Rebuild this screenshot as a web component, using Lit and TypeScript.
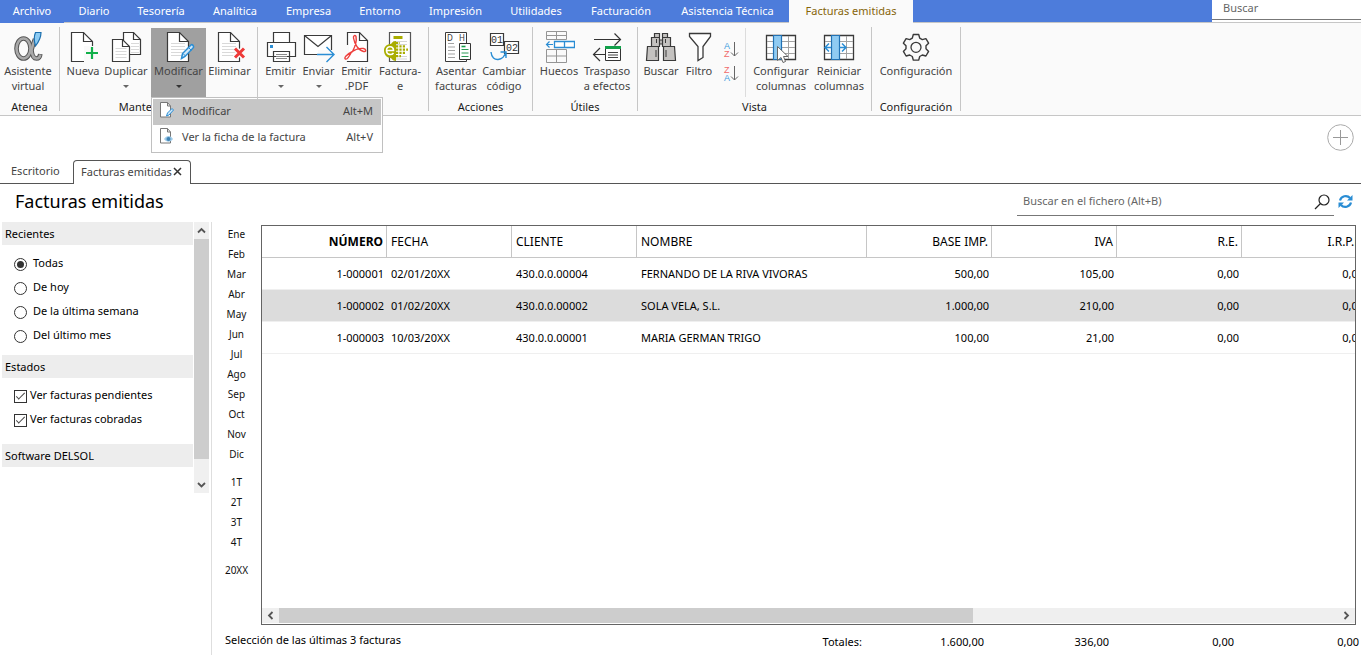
import { LitElement, html, css, svg, nothing } from "lit";
import { customElement, property, state } from "lit/decorators.js";
import { classMap } from "lit/directives/class-map.js";

const ink = "#3a3a3a";
const blue = "#2a8dd4";

const sheet = (x: number, y: number, w: number, h: number, f: number) => svg`
  <path d="M${x} ${y}h${w - f}l${f} ${f}v${h - f}h${-w}z" fill="#fff" stroke=${ink} stroke-width="1.2"/>
  <path d="M${x + w - f} ${y}v${f}h${f}" fill="none" stroke=${ink} stroke-width="1.2"/>`;

const textLines = (x: number, y: number, w: number, n: number, step: number) => svg`
  ${Array.from({ length: n }, (_, i) => svg`<path d="M${x} ${y + i * step}h${w}" stroke="#d9d9d9" stroke-width="1"/>`)}`;

const icons: Record<string, unknown> = {
  alpha: svg`
    <g fill="none" stroke="#555" stroke-width="4.600"><ellipse cx="11.500" cy="17.500" rx="7" ry="10"/>
      <path d="M23 8C21.500 12 20.500 15 19.500 19c.5 5 2 8.500 5 8.500 2 0 3.500-1.500 3.800-4.500"/></g>
    <g fill="none" stroke="#a9a9a9" stroke-width="2.600"><ellipse cx="11.500" cy="17.500" rx="7" ry="10"/>
      <path d="M23 8C21.500 12 20.500 15 19.500 19c.5 5 2 8.500 5 8.500 2 0 3.500-1.500 3.800-4"/></g>
    <path d="M23.500 1.500h5.500c0 5-2 9-5.500 13.500-1.500-5-2-9 0-13.500z" fill="#8ccbf3" stroke="#1b6fae" stroke-width="1.200"/>`,
  nueva: svg`${sheet(4.5, 1.5, 21, 29, 9)}
    <path d="M17 15h16v16H17z" fill="#fafafa"/><path d="M25 16v12M19 22h12" stroke="#12b04a" stroke-width="2.200"/>`,
  duplicar: svg`${sheet(13.5, 1.5, 17, 22, 7)}${textLines(21, 12.5, 8, 4, 3)}
    ${sheet(2.5, 8.5, 17, 22, 7)}${textLines(5.5, 17.5, 11, 4, 3)}`,
  modificar: svg`${sheet(4.5, 1.5, 21, 29, 9)}${textLines(8, 12.5, 14, 5, 3)}
    <path d="M18.500 27.500l1-5L28 14c1-1 3 .5 2.500 2.500L22 25.500z" fill="#cfe8fa" stroke=${blue} stroke-width="1.500"/>
    <path d="M25.500 16.500l3 3M20 22.500l2.500 2.500" stroke=${blue} stroke-width="1"/>`,
  eliminar: svg`${sheet(4.5, 1.5, 21, 29, 9)}${textLines(8, 12.5, 14, 5, 3)}
    <path d="M21 17.500l9 9M30 17.500l-9 9" stroke="#fafafa" stroke-width="6"/>
    <path d="M21 17.500l9 9M30 17.500l-9 9" stroke="#ee3a38" stroke-width="3"/>`,
  imprimir: svg`<g fill="#fff" stroke=${ink} stroke-width="1.200">
    <path d="M8.500 1.500h16v10h-16zM2.500 11.500h28v14h-28zM8.500 20.500h16v10h-16z"/></g>
    <path d="M11 23.500h11M11 25.500h11M11 27.500h11" stroke="#8a8a8a"/><path d="M5 14h3v3H5z" fill=${blue}/>`,
  enviar: svg`<path d="M1.500 4.500h27v19h-27z" fill="#fff" stroke=${ink} stroke-width="1.200"/>
    <path d="M1.500 4.500l13.500 11 13.500-11" fill="none" stroke=${ink} stroke-width="1.200"/>
    <path d="M15 19h16v8H15z" fill="#fafafa"/>
    <path d="M14 23.500h16M23.500 16l7.500 7.500-7.500 7.500" fill="none" stroke=${blue} stroke-width="1.400"/>`,
  pdf: svg`${sheet(6.5, 1.5, 20, 29, 8)}
    <path d="M3 14h5v16H3z" fill="#fafafa"/>
    <path d="M4.500 28c-2-1 1-4.500 7-7.500 3-5.500 4.500-10 3.500-15-.5-2-3-1-2.500 1.500 1 6 5 12.500 10 13.500 3 .500 3-2.500 0-3-4-.5-9 1.500-12 3.500-2 4-4.500 8-6 7z" fill="none" stroke="#ee3f3c" stroke-width="1.400"/>`,
  facturae: svg`<path d="M5.500 1.500h21v29h-21z" fill="#fff" stroke="#555" stroke-width="1.200"/>
    <path d="M9.500 5h9v3h-9z" fill="#a9ad00"/>
    <path d="M9 10.500h14M9 13.500h14M9 25.500h14M9 28h14" stroke="#d4d4d4"/>
    <path d="M0 19.500c0-4 3-6.500 7-6.500 1-2 3-3 5-3v20c-2 0-4-1-5-3-4 0-7-3-7-7.500z" fill="#a9ad00"/>
    <g fill="none" stroke="#a9ad00" stroke-width="2.200" stroke-dasharray="2.200 1.200"><path d="M12 12h4M12 15.300h9M12 18.600h12M12 21.900h10M12 25.200h5"/></g>
    <path d="M2.500 19.500h7c0-5-7-5-7 0 0 4.500 5 5 7 2.500" fill="none" stroke="#fff" stroke-width="1.600"/>`,
  asentar: svg`<path d="M5.500 1.500h21v29h-21z" fill="#fff" stroke=${ink}/>
    <text x="7" y="10" font-size="8" fill="#333">D</text><text x="19" y="10" font-size="8" fill="#333">H</text>
    <path d="M8 12.500h6M8 16h7M8 19.500h7M8 23h7M8 26.500h7" stroke="#a3a3a3"/>
    <path d="M19.500 12.500h11v16h-11z" fill="#fff" stroke="#333"/>
    <path d="M21.500 15.500h4" stroke="#12a04a" stroke-width="1.600"/><path d="M21.500 18.500h7M21.500 22h7M21.500 25.500h7" stroke="#2d9a56"/>`,
  cambiar: svg`<path d="M2.500 2.500h13v12h-13z" fill="#fff" stroke=${ink} stroke-width="1.200"/>
    <path d="M16.500 10.500h14v12h-14z" fill="#fff" stroke=${ink} stroke-width="1.200"/>
    <g font-family="Liberation Mono" font-size="10" fill="#333"><text x="3" y="12">01</text><text x="18" y="20">02</text></g>
    <path d="M3 21c1 11 13 9 15-.5M12.500 21h5.500v6" fill="none" stroke=${blue} stroke-width="1.400"/>`,
  huecos: svg`<path d="M3.500.5h20v8h-20zM3.500 4.500h20M13.500.500v8M3.500 18.500h20v13h-20zM3.500 25h20M13.500 18.500v13" fill="none" stroke="#959595"/>
    <path d="M11.500 10.500h20v6h-20zM21.500 10.500v6" fill="#fff" stroke=${blue} stroke-width="1.300"/>
    <path d="M10 13.500H3.500M6.500 10.500l-3 3 3 3" fill="none" stroke=${blue} stroke-width="1.200"/>`,
  traspaso: svg`<path d="M3 8.500h26M23.500 2.500l6 6-6 6M14 23.500H2.500M9 17l-6.500 6.500L9 30" fill="none" stroke="#333" stroke-width="1.200"/>
    <path d="M14.500 17.500h15v12h-15z" fill="#fff" stroke="#333"/><path d="M14 15h16v3H14z" fill="#12a04a"/>
    <path d="M17 21.500h10M17 24h10M17 26.500h10" stroke="#444"/>`,
  buscar: svg`<g fill="#c4c2c0" stroke=${ink} stroke-width="1.200"><path d="M9.500 2.500h5v4h-5zM17.500 2.500h5v4h-5zM6.500 6.500h8v9h-8zM17.500 6.500h8v9h-8zM14.500 9h3v4h-3zM2.500 15.500h11v14h-12zM18.500 15.500h11l1 14h-12z"/></g>
    <path d="M11 19v7M21 19v7M11.500 8v4M20.500 8v4" stroke=${ink}/>`,
  filtro: svg`<path d="M6.500 2.500h21v3l-7.500 10v11l-5 3v-14l-8.500-10z" fill="#fff" stroke=${ink} stroke-width="1.300"/>`,
  columnas: svg`<path d="M1.500 4.500h29v24h-29z" fill="#fff" stroke=${ink} stroke-width="1.300"/>
    <path d="M2 10.500h28M2 16.500h28M2 22.500h28M23.500 5v23" stroke="#a3a3a3"/>
    <path d="M8.500 4.500h8v24h-8z" fill="#90cbf2" stroke="#2272b5" stroke-width="1.200"/>
    <path d="M12.500 15.500v14l3.500-3 2 5 2.500-1-2-5h4.500z" fill="#fff" stroke="#666"/>`,
  reiniciar: svg`<path d="M1.500 4.500h29v24h-29z" fill="#fff" stroke=${ink} stroke-width="1.300"/>
    <path d="M2 10.500h28M2 16.500h28M2 22.500h28M23.500 5v23" stroke="#a3a3a3"/>
    <path d="M8.500 4.500h8v24h-8z" fill="#90cbf2" stroke="#2272b5" stroke-width="1.200"/>
    <path d="M8 16.500H2M6 12.500l-4 4 4 4M16.500 16.500h6.500M19 12.500l4 4-4 4" fill="none" stroke=${blue} stroke-width="1.500"/>`,
  engranaje: svg`<path d="M13.300 3.500h5.400l1 3.600 2.600 1.500 3.600-1 2.700 4.600-2.600 2.600v3l2.600 2.600-2.700 4.600-3.600-1-2.600 1.500-1 3.600h-5.400l-1-3.600-2.600-1.500-3.600 1-2.700-4.600 2.600-2.600v-3L3.400 12.200l2.700-4.600 3.600 1 2.600-1.500z" fill="none" stroke=${ink} stroke-width="1.400" stroke-linejoin="round"/>
    <circle cx="16" cy="16.300" r="5" fill="none" stroke=${ink} stroke-width="1.300"/>`,
};

interface Tool {
  icon: string;
  label: string[];
  drop?: boolean;
  menu?: boolean;
}
interface Group {
  cls: string;
  title: string;
  tools: (Tool | "sort")[];
}

const groups: Group[] = [
  { cls: "atenea", title: "Atenea", tools: [{ icon: "alpha", label: ["Asistente", "virtual"] }] },
  {
    cls: "mant",
    title: "Mantenimiento",
    tools: [
      { icon: "nueva", label: ["Nueva"] },
      { icon: "duplicar", label: ["Duplicar"], drop: true },
      { icon: "modificar", label: ["Modificar"], drop: true, menu: true },
      { icon: "eliminar", label: ["Eliminar"] },
    ],
  },
  {
    cls: "emision",
    title: "",
    tools: [
      { icon: "imprimir", label: ["Emitir"], drop: true },
      { icon: "enviar", label: ["Enviar"], drop: true },
      { icon: "pdf", label: ["Emitir", ".PDF"] },
      { icon: "facturae", label: ["Factura-", "e"] },
    ],
  },
  {
    cls: "acciones",
    title: "Acciones",
    tools: [
      { icon: "asentar", label: ["Asentar", "facturas"] },
      { icon: "cambiar", label: ["Cambiar", "código"] },
    ],
  },
  {
    cls: "utiles",
    title: "Útiles",
    tools: [
      { icon: "huecos", label: ["Huecos"] },
      { icon: "traspaso", label: ["Traspaso", "a efectos"] },
    ],
  },
  {
    cls: "vista",
    title: "Vista",
    tools: [
      { icon: "buscar", label: ["Buscar"] },
      { icon: "filtro", label: ["Filtro"] },
      "sort",
      { icon: "columnas", label: ["Configurar", "columnas"] },
      { icon: "reiniciar", label: ["Reiniciar", "columnas"] },
    ],
  },
  { cls: "config", title: "Configuración", tools: [{ icon: "engranaje", label: ["Configuración"] }] },
];

@customElement("app-ribbon")
class AppRibbon extends LitElement {
  @state() private open = true;

  static styles = css`
    :host {
      display: flex;
      background: #fafafa;
      border-bottom: 1px solid #c6c6c6;
      padding-top: 4px;
      position: relative;
      z-index: 2;
    }
    .group { position: relative; flex: none; padding-right: 1px; }
    .group::after {
      content: "";
      position: absolute;
      right: 0;
      top: 0;
      bottom: 4px;
      width: 1px;
      background: #c6c6c6;
    }
    .tools { display: grid; height: 70px; padding-top: 1px; box-sizing: border-box; }
    .atenea .tools { grid-template-columns: 56px; padding-right: 3px; }
    .mant .tools { grid-template-columns: 36px 50px 55px 47px; padding-left: 5px; padding-right: 4px; }
    .emision .tools { grid-template-columns: 37px 39px 37px 50px; padding-left: 4px; padding-right: 3px; }
    .acciones .tools { grid-template-columns: 48px 48px; padding-left: 3px; padding-right: 4px; }
    .utiles .tools { grid-template-columns: 46px 50px; padding-left: 3px; padding-right: 5px; }
    .vista .tools { grid-template-columns: 40px 36px 33px 62px 54px; padding-left: 3px; padding-right: 5px; }
    .config .tools { grid-template-columns: 88px; }
    .title {
      height: 18px;
      line-height: 20px;
      text-align: center;
      color: #1a1a1a;
    }
    .slot { position: relative; display: grid; }
    button { font: inherit; color: inherit; border: 0; background: none; padding: 0; margin: 0; }
    .tool {
      display: flex;
      flex-direction: column;
      align-items: center;
      padding-top: 3px;
      color: #444;
      line-height: 15px;
      white-space: nowrap;
      min-width: 0;
    }
    .tool svg { width: 32px; height: 32px; flex: none; }
    .tool.pressed { background: #a0a0a0; }
    .arrow {
      width: 0;
      border: 3px solid transparent;
      border-top-color: #666;
      border-bottom: 0;
      margin-top: 7px;
    }
    .pressed .arrow { border-top-color: #333; }
    .sorts {
      display: flex;
      flex-direction: column;
      gap: 7px;
      padding-top: 13px;
      padding-left: 6px;
      border-right: 1px solid #dcdcdc;
      margin-right: 4px;
    }
    .sorts button { width: 16px; height: 17px; }
    .sorts svg { display: block; width: 16px; height: 17px; overflow: visible; }
    .menu {
      position: absolute;
      left: 0;
      top: 100%;
      width: 232px;
      box-sizing: border-box;
      border: 1px solid #c0c0c0;
      background: #fff;
      padding: 1px;
    }
    .item {
      display: flex;
      align-items: center;
      width: 100%;
      height: 26px;
      padding: 0 8px 4px 5px;
      color: #444;
      white-space: nowrap;
    }
    .item svg { width: 16px; height: 18px; margin-right: 8px; }
    .item .key { margin-left: auto; }
    .item.on { background: #c6c6c6; }
  `;

  private icon(name: string) {
    return html`<svg viewBox="0 0 32 32" aria-hidden="true">${icons[name]}</svg>`;
  }

  private sort(first: string, second: string, az: boolean) {
    const top = az ? "#3a9bdc" : "#f06a6a";
    const bottom = az ? "#f06a6a" : "#3a9bdc";
    return html`<button aria-label=${az ? "Orden ascendente" : "Orden descendente"}>
      <svg viewBox="0 0 16 17">
        <g font-family="Liberation Sans" font-size="9"><text x="1" y="8" fill=${top}>${first}</text><text x="1" y="16" fill=${bottom}>${second}</text></g>
        <path d="M11.500 1v14M8 11.500l3.500 3.500 3.500-3.500" fill="none" stroke="#666" />
      </svg>
    </button>`;
  }

  private menu() {
    const page = svg`<path d="M2.500 1.500h7l3 3.500v11h-10z" fill="#fff" stroke="#777"/><path d="M9.500 1.500v3.500h3" fill="none" stroke="#777"/>`;
    return html`<div class="menu" role="menu">
      <button class="item on" role="menuitem">
        <svg viewBox="0 0 16 18">${page}<path d="M8.500 15l1-3 4.500-4.500 1.500 1.500-4.500 5z" fill="#cfe8fa" stroke=${blue} /></svg>
        <span>Modificar</span><span class="key">Alt+M</span>
      </button>
      <button class="item" role="menuitem">
        <svg viewBox="0 0 16 18">${page}<path d="M6 12c2.500-4 6.500-4 9 0-2.500 3.500-6.500 3.500-9 0z" fill="#9fcbe8" /><circle cx="10.500" cy="12" r="2" fill="#3f83b5" /></svg>
        <span>Ver la ficha de la factura</span><span class="key">Alt+V</span>
      </button>
    </div>`;
  }

  private tool(t: Tool) {
    const pressed = !!t.menu && this.open;
    return html`<div class="slot">
      <button class=${classMap({ tool: true, pressed })} @click=${() => t.menu && (this.open = !this.open)}>
        ${this.icon(t.icon)}${t.label.map((l) => html`<span>${l}</span>`)}
        ${t.drop ? html`<span class="arrow"></span>` : nothing}
      </button>
      ${pressed ? this.menu() : nothing}
    </div>`;
  }

  render() {
    return groups.map(
      (g) => html`<section class="group ${g.cls}">
        <div class="tools">
          ${g.tools.map((t) =>
            t === "sort"
              ? html`<div class="sorts">${this.sort("A", "Z", true)}${this.sort("Z", "A", false)}</div>`
              : this.tool(t)
          )}
        </div>
        <div class="title">${g.title}</div>
      </section>`
    );
  }
}

@customElement("filter-panel")
class FilterPanel extends LitElement {
  static styles = css`
    :host { display: flex; align-items: flex-start; width: 209px; flex: none; }
    .list { flex: 1; padding-left: 2px; margin-right: 1px; }
    h2 {
      margin: 0;
      font-size: 11px;
      font-weight: 400;
      line-height: 23px;
      padding-left: 3px;
      background: #ededed;
      color: #000;
    }
    .rows { padding: 7px 0 7px 12px; }
    .rows.checks { padding: 6px 0 12px 12px; }
    label { display: flex; align-items: center; height: 24px; line-height: 22px; gap: 6px; }
    .checks label { gap: 3px; }
    label span { padding-bottom: 2px; }
    input {
      appearance: none;
      flex: none;
      width: 13px;
      height: 13px;
      margin: 0;
      border: 1px solid #333;
      background: #fff;
      display: grid;
      place-content: center;
    }
    input[type="radio"] { border-radius: 50%; }
    input[type="radio"]:checked::before {
      content: "";
      width: 7px;
      height: 7px;
      border-radius: 50%;
      background: #333;
    }
    input[type="checkbox"]:checked::before {
      content: "";
      width: 8px;
      height: 3px;
      margin-bottom: 3px;
      border: solid #444;
      border-width: 0 0 1px 1px;
      rotate: -45deg;
    }
    .bar {
      width: 15px;
      height: 271px;
      background: #f0f0f0;
      display: flex;
      flex-direction: column;
    }
    .bar button { border: 0; background: none; padding: 0; height: 17px; }
    .bar .thumb { flex: 1; background: #cdcdcd; margin-bottom: 17px; }
    .bar svg { display: block; margin: auto; width: 9px; height: 9px; }
  `;

  render() {
    const recent = ["Todas", "De hoy", "De la última semana", "Del último mes"];
    return html`<div class="list">
        <h2>Recientes</h2>
        <div class="rows">
          ${recent.map((r, i) => html`<label><input type="radio" name="recent" ?checked=${i === 0} /><span>${r}</span></label>`)}
        </div>
        <h2>Estados</h2>
        <div class="rows checks">
          <label><input type="checkbox" checked /><span>Ver facturas pendientes</span></label>
          <label><input type="checkbox" checked /><span>Ver facturas cobradas</span></label>
        </div>
        <h2>Software DELSOL</h2>
      </div>
      <div class="bar">
        <button aria-label="Subir"><svg viewBox="0 0 9 9"><path d="M1 6.500L4.500 3 8 6.500" fill="none" stroke="#555" stroke-width="1.800" /></svg></button>
        <div class="thumb"></div>
        <button aria-label="Bajar"><svg viewBox="0 0 9 9"><path d="M1 3l3.500 3.500L8 3" fill="none" stroke="#555" stroke-width="1.800" /></svg></button>
      </div>`;
  }
}

@customElement("invoice-grid")
class InvoiceGrid extends LitElement {
  @property({ type: Number }) selected = 1;

  static styles = css`
    :host {
      display: flex;
      flex-direction: column;
      flex: 1;
      min-height: 0;
      border: 1px solid #646464;
      overflow: hidden;
      background: #fff;
    }
    .view { flex: 1; overflow: hidden; min-height: 0; }
    table { border-collapse: separate; border-spacing: 0; table-layout: fixed; width: 1105px; font-size: 11px; color: #000; }
    .std { width: 125px; }
    .wide { width: 230px; }
    th, td {
      box-sizing: border-box;
      height: 32px;
      padding: 0 3px 0 4px;
      text-align: left;
      font-weight: 400;
      white-space: nowrap;
      border-bottom: 1px solid #efefef;
    }
    th { font-size: 12px; border-bottom-color: #c6c6c6; border-right: 1px solid #c6c6c6; }
    .num { text-align: right; }
    .bold { font-weight: 700; }
    .sel td { background: #dcdcdc; }
    .scroll { display: flex; height: 15px; background: #efefef; margin-bottom: 1px; }
    .scroll button { border: 0; background: none; padding: 0; width: 17px; flex: none; }
    .scroll svg { display: block; margin: auto; width: 9px; height: 9px; }
    .track { flex: 1; }
    .thumb { width: 65.5%; height: 100%; background: #cdcdcd; }
  `;

  render() {
    const heads = ["NÚMERO", "FECHA", "CLIENTE", "NOMBRE", "BASE IMP.", "IVA", "R.E.", "I.R.P.F."];
    const rows = [
      ["1-000001", "02/01/20XX", "430.0.0.00004", "FERNANDO DE LA RIVA VIVORAS", "500,00", "105,00", "0,00", "0,00"],
      ["1-000002", "01/02/20XX", "430.0.0.00002", "SOLA VELA, S.L.", "1.000,00", "210,00", "0,00", "0,00"],
      ["1-000003", "10/03/20XX", "430.0.0.00001", "MARIA GERMAN TRIGO", "100,00", "21,00", "0,00", "0,00"],
    ];
    const num = (i: number) => i === 0 || i > 3;
    return html`<div class="view">
        <table>
          <colgroup>
            ${heads.map((_, i) => html`<col class=${i === 3 ? "wide" : "std"} />`)}
          </colgroup>
          <thead>
            <tr>${heads.map((h, i) => html`<th class=${classMap({ num: num(i), bold: i === 0 })}>${h}</th>`)}</tr>
          </thead>
          <tbody>
            ${rows.map(
              (r, n) => html`<tr class=${classMap({ sel: n === this.selected })}>
                ${r.map((c, i) => html`<td class=${classMap({ num: num(i) })}>${c}</td>`)}
              </tr>`
            )}
          </tbody>
        </table>
      </div>
      <div class="scroll">
        <button aria-label="Izquierda"><svg viewBox="0 0 9 9"><path d="M6.500 1L3 4.500 6.500 8" fill="none" stroke="#555" stroke-width="1.800" /></svg></button>
        <div class="track"><div class="thumb"></div></div>
        <button aria-label="Derecha"><svg viewBox="0 0 9 9"><path d="M2.500 1L6 4.500 2.500 8" fill="none" stroke="#555" stroke-width="1.800" /></svg></button>
      </div>`;
  }
}

@customElement("app-root")
class AppRoot extends LitElement {
  static styles = css`
    :host {
      display: flex;
      flex-direction: column;
      height: 100vh;
      min-height: 600px;
      overflow: hidden;
      background: #fff;
      color: #000;
      font-family: "Noto Sans", sans-serif;
      font-size: 11px;
    }
    button { font: inherit; color: inherit; border: 0; background: none; padding: 0; margin: 0; }
    a { color: inherit; text-decoration: none; }
    .top { display: flex; height: 23px; background: #4d7cdb; flex: none; box-shadow: inset 0 -1px #c6c6c6; }
    nav {
      display: grid;
      grid-template-columns: 64px 60px 74px 74px 73px 70px 81px 80px 90px 123px 124px;
      color: #fff;
      line-height: 22px;
      text-align: center;
      white-space: nowrap;
      flex: none;
    }
    nav a { height: 22px; }
    nav .first { height: 23px; background: #4d7cdb; }
    nav .active { height: 23px; background: #fafafa; color: #86650a; }
    .finder { margin-left: auto; width: 149px; background: #fff; height: 22px; }
    .finder input { height: 20px; padding: 0 11px 4px; border-bottom: 1px solid #777; }
    input {
      box-sizing: border-box;
      width: 100%;
      border: 0;
      background: none;
      font: inherit;
      color: #555;
      outline: 0;
      display: block;
    }
    input::placeholder { color: #666; opacity: 1; }
    .desk { display: flex; justify-content: flex-end; padding: 8px 7px 0 0; height: 36px; flex: none; }
    .desk button { width: 27px; height: 27px; }
    .desk svg { display: block; width: 27px; height: 27px; }
    .tabs { display: flex; height: 24px; line-height: 22px; color: #444; flex: none; box-shadow: inset 0 -1px #555; }
    .tabs .plain { width: 73px; box-sizing: border-box; padding-left: 11px; }
    .tabs .current {
      display: flex;
      align-items: center;
      box-sizing: border-box;
      width: 118px;
      padding: 0 8px 2px 7px;
      justify-content: space-between;
      background: #fff;
      border: 1px solid #555;
      border-bottom: 0;
      border-radius: 4px 4px 0 0;
      white-space: nowrap;
    }
    .current button { line-height: 0; }
    .current svg { width: 9px; height: 9px; }
    .head { display: flex; align-items: flex-start; height: 38px; padding: 0 8px 0 15px; box-sizing: border-box; flex: none; }
    h1 { margin: 0; font-size: 18px; font-weight: 400; color: #000; line-height: 34px; flex: 1; }
    .search { display: flex; align-items: center; width: 317px; height: 28px; box-sizing: border-box; border-bottom: 1px solid #777; padding: 0 4px 0 6px; margin-right: 4px; margin-top: 4px; }
    .search input { padding: 0 0 2px; }
    .search svg { width: 16px; height: 16px; flex: none; display: block; }
    .refresh { margin-top: 10px; }
    .refresh svg { width: 15px; height: 15px; display: block; }
    .work { display: flex; flex: 1; min-height: 0; }
    .main { display: flex; flex: 1; min-width: 0; border-left: 1px solid #dedede; margin-left: 2px; }
    .months { width: 49px; flex: none; display: flex; flex-direction: column; padding-top: 3px; font-size: 10px; color: #111; }
    .months button { height: 20px; line-height: 18px; padding-bottom: 2px; }
    .months .gap { margin-top: 8px; }
    .data { flex: 1; min-width: 0; display: flex; flex-direction: column; padding-top: 3px; }
    invoice-grid { margin-right: 5px; }
    .wrap { display: flex; flex-direction: column; flex: 1; min-width: 0; }
    .row { display: flex; flex: 1; min-height: 0; }
    footer { display: flex; height: 30px; padding: 0 2px 0 13px; flex: none; }
    footer .msg { flex: 1; line-height: 29px; }
    dl { display: flex; margin: 0; line-height: 33px; }
    dd { margin: 0; width: 125px; text-align: right; }
    dl dd:first-of-type { width: 122px; }
  `;

  render() {
    const menus = ["Archivo", "Diario", "Tesorería", "Analítica", "Empresa", "Entorno", "Impresión", "Utilidades", "Facturación", "Asistencia Técnica", "Facturas emitidas"];
    const months = ["Ene", "Feb", "Mar", "Abr", "May", "Jun", "Jul", "Ago", "Sep", "Oct", "Nov", "Dic", "1T", "2T", "3T", "4T", "20XX"];
    return html`
      <header class="top">
        <nav>
          ${menus.map((m, i) => html`<a href="#" class=${classMap({ first: i === 0, active: i === menus.length - 1 })}>${m}</a>`)}
        </nav>
        <div class="finder"><input type="text" placeholder="Buscar" aria-label="Buscar" /></div>
      </header>
      <app-ribbon></app-ribbon>
      <div class="desk">
        <button aria-label="Añadir">
          <svg viewBox="0 0 27 27"><circle cx="13.500" cy="13.500" r="12.800" fill="none" stroke="#aaa" /><path d="M13.500 6v15M6 13.500h15" stroke="#999" /></svg>
        </button>
      </div>
      <div class="tabs">
        <a class="plain" href="#">Escritorio</a>
        <div class="current">
          <a href="#">Facturas emitidas</a>
          <button aria-label="Cerrar"><svg viewBox="0 0 9 9"><path d="M1 1l7 7M8 1L1 8" stroke="#333" stroke-width="1.500" /></svg></button>
        </div>
      </div>
      <div class="head">
        <h1>Facturas emitidas</h1>
        <div class="search">
          <input type="text" placeholder="Buscar en el fichero (Alt+B)" aria-label="Buscar en el fichero" />
          <svg viewBox="0 0 16 16"><circle cx="10" cy="6" r="5" fill="none" stroke="#222" stroke-width="1.200" /><path d="M6.500 9.500L1 15" stroke="#222" stroke-width="1.200" /></svg>
        </div>
        <button class="refresh" aria-label="Actualizar">
          <svg viewBox="0 0 15 15"><path d="M2 6.500C3 2 9 .500 12 4M13 8.500C12 13 6 14.500 3 11" fill="none" stroke=${blue} stroke-width="2.200" /><path d="M14.500 1v5.500H9zM.5 14V8.500H6z" fill=${blue} /></svg>
        </button>
      </div>
      <div class="work">
        <filter-panel></filter-panel>
        <main class="main">
          <div class="wrap">
            <div class="row">
              <div class="months">
                ${months.map((m, i) => html`<button class=${classMap({ gap: i === 12 || i === 16 })}>${m}</button>`)}
              </div>
              <div class="data"><invoice-grid></invoice-grid></div>
            </div>
            <footer>
              <div class="msg">Selección de las últimas 3 facturas</div>
              <dl><dt>Totales:</dt><dd>1.600,00</dd><dd>336,00</dd><dd>0,00</dd><dd>0,00</dd></dl>
            </footer>
          </div>
        </main>
      </div>
    `;
  }
}
